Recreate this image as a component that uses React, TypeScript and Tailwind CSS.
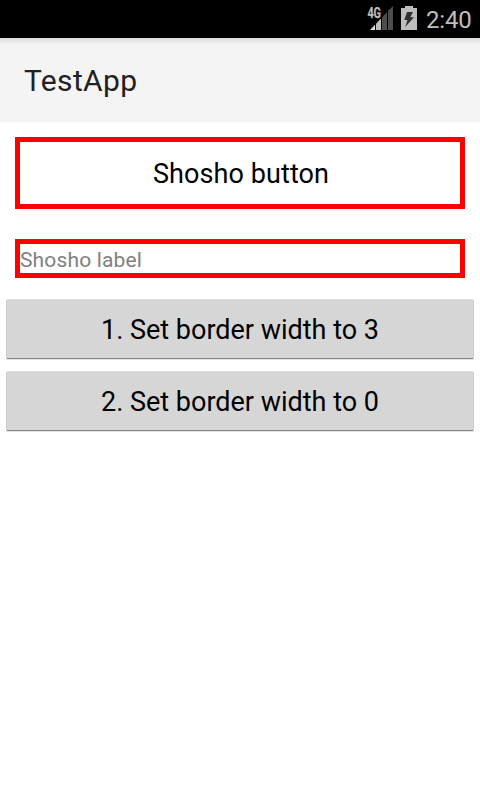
function StatusBar() {
  return (
    <header className="flex h-[38px] items-center justify-end bg-black pr-[9px]">
      <svg className="h-[38px] w-[27px]" viewBox="0 0 27 38">
        <path d="M3 30 8 24.7V30Z" fill="#dedede" />
        <path d="M9 23.7 14 18.5V30H9Z" fill="#bebebe" />
        <path d="M15 17.5 20 12V30H15Z" fill="#4d4d4d" />
        <path d="M21 11 26 6V30H21Z" fill="#4d4d4d" />
        <text x="0.4" y="17.6" fontSize="14.5" fontWeight="700" fill="#bdbdbd" stroke="#bdbdbd" strokeWidth="0.25" fontFamily="Roboto, sans-serif" textLength="13.6" lengthAdjust="spacingAndGlyphs">4G</text>
      </svg>
      <svg className="ml-[7px] h-[38px] w-4" viewBox="0 0 16 38">
        <path d="M4 6H12V8H16V30H0V8H4Z" fill="#bdbdbd" />
        <path d="M6 12H12L9.3 17.2H13L4.2 27L6.4 20H3.3Z" fill="#303030" />
      </svg>
      <span className="ml-[9px] w-[45px] whitespace-nowrap pt-0.5 text-[24px] leading-[38px] tracking-[-0.2px] text-[#bebebe]">2:40</span>
    </header>
  );
}

function ActionButton({ children }: { children: string }) {
  return (
    <button className="block h-[60px] w-full rounded-[2px] border border-[#cbcbcb] border-t-[#dedede] border-b-[#858585] bg-[#d6d6d6] pt-[3px] text-[27px] leading-[55px] text-black shadow-[0_1px_0_#e4e4e4]">
      {children}
    </button>
  );
}

export default function App() {
  return (
    <div className="h-[800px] w-[480px] overflow-hidden bg-white font-['Roboto',sans-serif]">
      <StatusBar />
      <div className="h-[84px] bg-[#f4f4f4] bg-linear-to-b from-[#dcdcdc] to-[#f4f4f4] to-[7px] pl-6 pt-px text-[30px] leading-[84px] tracking-[0.35px] text-[#212121]">
        TestApp
      </div>
      <main className="flex flex-col pt-[15px]">
        <button className="mx-[15px] h-[72px] border-[5px] border-[#ff0000] pt-0.5 pl-[2px] text-[27px] leading-[60px] tracking-[0.08px] text-black">
          Shosho button
        </button>
        <div className="mx-[15px] mt-[30px] h-[39px] border-[5px] border-[#ff0000] pt-0.5 text-[21px] leading-[29px] tracking-[0.15px] text-[#808080]">
          Shosho label
        </div>
        <div className="mt-[21px] flex flex-col gap-3 px-1.5">
          <ActionButton>1. Set border width to 3</ActionButton>
          <ActionButton>2. Set border width to 0</ActionButton>
        </div>
      </main>
    </div>
  );
}
